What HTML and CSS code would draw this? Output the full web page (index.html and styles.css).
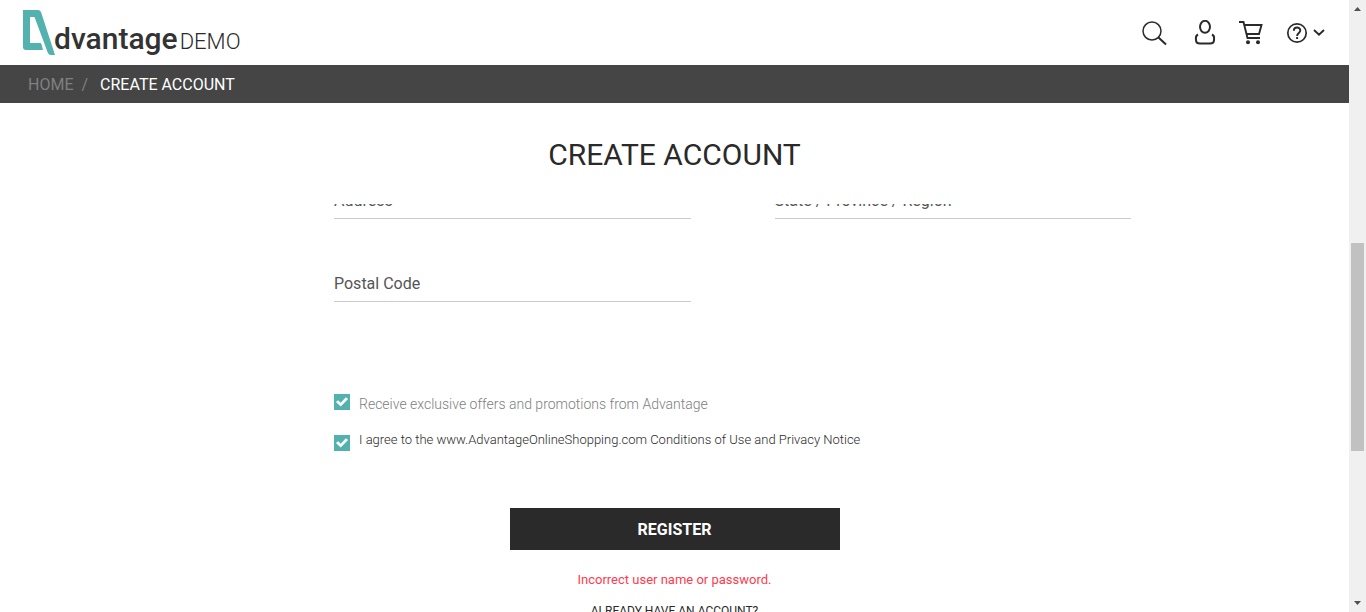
FILE: index.html
```html
<!DOCTYPE html>
<html lang="en">
<head>
<meta charset="utf-8">
<title>Advantage Demo - Create Account</title>
<link rel="stylesheet" href="styles.css">
</head>
<body>
<div class="page">
  <header class="header">
    <a class="logo" href="#">
      <svg class="logo-mark" width="32" height="46" viewBox="0 0 32 46" aria-hidden="true"><path fill="#53b2ad" d="M0 1H15Q17 1 18 3L32 46H28Q25.500 46 24.500 43L11.500 8H7V34H17Q18 34 18.500 35L20 41H3Q0 41 0 38Z"/></svg>
      <span class="logo-name">dvantage</span><span class="logo-demo">DEMO</span>
    </a>
    <nav class="tools">
      <button class="tool" type="button" aria-label="Search"><svg width="30" height="26" viewBox="0 0 30 26"><circle cx="10" cy="11" r="9" stroke-width="1.500"/><path d="M16.500 17.500l7.500 7" stroke-width="2"/></svg></button>
      <button class="tool" type="button" aria-label="User"><svg width="22" height="26" viewBox="0 0 22 26"><ellipse cx="11" cy="6.800" rx="5" ry="6" stroke-width="2"/><path d="M4 14.500C1 16 2 18 2 20Q2 23.500 6 23.500H16Q20 23.500 20 20C20 18 21 16 18 14.500" stroke-width="2"/></svg></button>
      <button class="tool" type="button" aria-label="Cart"><svg width="26" height="26" viewBox="0 0 26 26"><path d="M1 2H5.500L9.500 18H22M6 5H23.500L21 14H8.500" stroke-width="1.900"/><circle class="wheel" cx="10" cy="22.200" r="2"/><circle class="wheel" cx="20" cy="22.200" r="2"/></svg></button>
      <button class="tool" type="button" aria-label="Help"><svg width="40" height="22" viewBox="0 0 40 22"><circle cx="11" cy="11" r="9.200" stroke-width="1.700"/><path d="M7.800 8.800C7.800 4.400 14.300 4.400 14.300 8.500C14.300 11 11.100 11 11.100 14M11.100 15V17M28 8L33 12.700L38 8" stroke-width="1.900"/></svg></button>
    </nav>
  </header>
  <nav class="crumbs" aria-label="Breadcrumb"><a href="#">HOME</a><span class="slash">/</span><a class="current" href="#">CREATE ACCOUNT</a></nav>
  <main class="content">
    <h1 class="title">CREATE ACCOUNT</h1>
    <form class="form">
      <div class="scroller">
        <div class="fields">
          <div class="field"><label for="address">Address</label><input id="address" type="text"></div>
          <div class="field"><label for="region">State / Province / Region</label><input id="region" type="text"></div>
          <div class="field"><label for="postal">Postal Code</label><input id="postal" type="text"></div>
        </div>
        <div class="option offers"><input id="offers" type="checkbox" checked><label for="offers">Receive exclusive offers and promotions from Advantage</label></div>
        <div class="option agree"><input id="agree" type="checkbox" checked><label for="agree">I agree to the www.AdvantageOnlineShopping.com Conditions of Use and Privacy Notice</label></div>
      </div>
      <button class="register" type="button">REGISTER</button>
      <p class="error">Incorrect user name or password.</p>
      <a class="login" href="#">ALREADY HAVE AN ACCOUNT?</a>
    </form>
  </main>
</div>
<div class="scrollbar" aria-hidden="true">
  <svg width="17" height="17" viewBox="0 0 17 17"><path d="M5 11L8.500 7L12 11Z"/></svg>
  <div class="track"><div class="thumb"></div></div>
  <svg width="17" height="17" viewBox="0 0 17 17"><path d="M5 6L8.500 10L12 6Z"/></svg>
</div>
</body>
</html>
```
FILE: styles.css
```css
* { box-sizing: border-box; }
body {
  margin: 0;
  height: 100vh;
  display: flex;
  overflow: hidden;
  font-family: Roboto, "Liberation Sans", sans-serif;
  color: #2a2a2a;
  background: #fff;
}
a { color: inherit; text-decoration: none; }
.page { flex: 1; min-width: 0; }
.header {
  height: 65px;
  display: flex;
  align-items: flex-start;
  justify-content: space-between;
  padding: 9px 23px 0;
}
.logo { display: flex; }
.logo-name { font-size: 30px; font-weight: 500; line-height: 36px; padding-top: 12px; margin-left: -1px; color: #333; }
.logo-demo { font-size: 22px; font-weight: 300; line-height: 28px; padding-top: 19px; margin-left: 2px; }
.tools { display: flex; align-items: center; gap: 22px; padding-top: 11px; }
.tool { display: flex; padding: 0; border: 0; background: none; }
.tool svg { fill: none; stroke: #2a2a2a; }
.tool .wheel { fill: #2a2a2a; stroke: none; }
.crumbs {
  height: 38px;
  display: flex;
  align-items: center;
  padding: 0 28px;
  background: #454545;
  color: #808080;
  font-size: 16px;
}
.slash { margin: 0 12px 0 8px; }
.current { color: #fff; }
.title {
  margin: 0;
  padding: 33px 0 31px;
  text-align: center;
  font-size: 30px;
  line-height: 37px;
  font-weight: 400;
}
.form { display: flex; flex-direction: column; align-items: center; }
.scroller { width: 100%; overflow: hidden; padding: 0 218px 57px 334px; }
.fields {
  display: grid;
  grid-template-columns: 1fr 1fr;
  gap: 47px 84px;
  margin-top: -21px;
}
.field { display: grid; }
.field label, .field input { grid-area: 1 / 1; }
.field label { font-size: 16px; line-height: 36px; color: #555; }
.field input {
  width: 100%;
  height: 36px;
  padding: 0;
  border: 0;
  border-bottom: 1px solid #ccc;
  background: transparent;
  font: inherit;
}
.option { display: flex; align-items: flex-start; gap: 9px; }
.option input {
  appearance: none;
  width: 16px;
  height: 16px;
  margin: 0;
  background: #53b2ad;
}
.option input:checked::before {
  content: "";
  display: block;
  height: 16px;
  background: #fff;
  clip-path: polygon(12% 50%, 26% 39%, 42% 55%, 74% 20%, 88% 32%, 42% 78%);
}
.offers { margin-top: 92px; font-size: 14px; line-height: 20px; font-weight: 300; color: #808080; }
.agree { margin-top: 16px; font-size: 13px; line-height: 20px; font-weight: 300; }
.agree input { margin-top: 5px; }
.register {
  width: 330px;
  height: 42px;
  border: 0;
  background: #2a2a2a;
  color: #fff;
  font: 700 16px Roboto, sans-serif;
}
.error { margin: 20px 0 12px; font-size: 13px; line-height: 20px; color: #ff3b4e; }
.login { font-size: 12px; line-height: 18px; }
.scrollbar { width: 17px; display: flex; flex-direction: column; background: #f0f0f0; }
.scrollbar path { fill: #505050; }
.track { flex: 1; padding: 0 2px; }
.thumb { height: 36%; margin-top: 226px; background: #c1c1c1; }
```
